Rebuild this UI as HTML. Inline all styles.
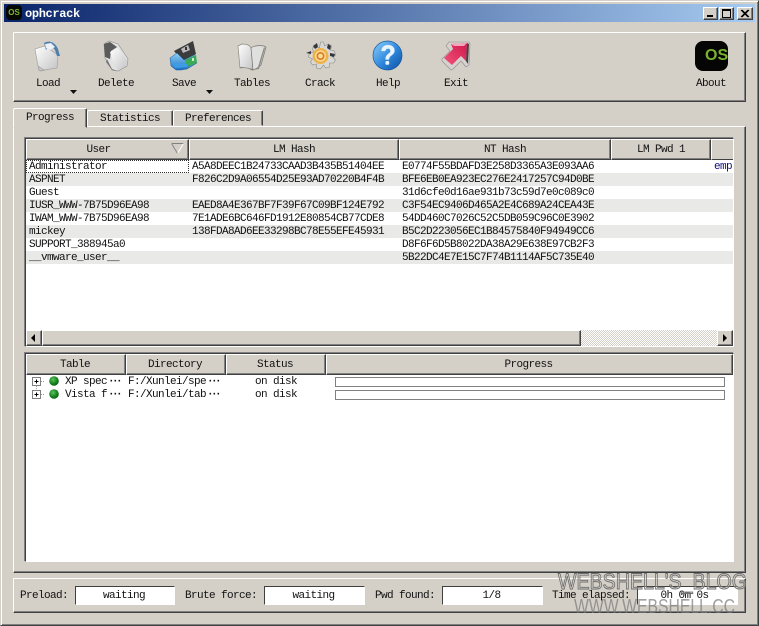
<!DOCTYPE html>
<html><head><meta charset="utf-8"><title>ophcrack</title>
<style>
html,body{margin:0;padding:0;background:#d4d0c8}
body{position:relative;width:759px;height:626px;overflow:hidden;font:11px/13px "Liberation Mono",monospace;letter-spacing:-.6px;color:#111}
div{position:absolute;box-sizing:border-box;white-space:pre}
.c{text-align:center}
.raised{background:#d4d0c8;border:1px solid;border-color:#fff #404040 #404040 #fff;box-shadow:inset -1px -1px 0 #808080}
.hd{background:#d4d0c8;border:1px solid;border-color:#fff #404040 #404040 #fff;box-shadow:inset -1px -1px 0 #808080;text-align:center;line-height:21px}
.sunk{background:#fff;border:1px solid;border-color:#404040 #fff #fff #404040;box-shadow:-1px -1px 0 #808080}
.row{left:26px;width:707px;height:13px}
.z{background:#e9e9e7}
.tab{background:#d4d0c8;border:1px solid;border-color:#fff #404040 #d4d0c8 #fff;box-shadow:inset -1px 0 0 #808080;border-radius:2px 2px 0 0;text-align:center}
.e{letter-spacing:-2.6px;font-weight:bold;margin-left:1px}
svg{position:absolute;overflow:visible}
</style></head><body>

<!-- window frame -->
<div style="left:0;top:0;width:759px;height:626px;border:1px solid;border-color:#d4d0c8 #404040 #404040 #d4d0c8;box-shadow:inset 1px 1px 0 #fff,inset -1px -1px 0 #808080"></div>
<!-- title bar -->
<div style="left:4px;top:4px;width:751px;height:18px;background:linear-gradient(90deg,#0a246a,#a6caf0)"></div>
<div style="left:6px;top:5px;width:16px;height:15px;background:#050805;border-radius:4px;color:#7fb82e;font:bold 8px/15px 'Liberation Sans',sans-serif;letter-spacing:0;text-align:center">OS</div>
<div style="left:25px;top:7px;color:#fff;font:bold 12px/14px 'Liberation Mono',monospace;letter-spacing:-.35px">ophcrack</div>
<div class="raised" style="left:703px;top:7px;width:15px;height:13px"></div>
<div style="left:707px;top:15px;width:6px;height:2px;background:#000"></div>
<div class="raised" style="left:719px;top:7px;width:15px;height:13px"></div>
<div style="left:722px;top:9px;width:9px;height:9px;border:1px solid #000;border-top-width:2px"></div>
<div class="raised" style="left:737px;top:7px;width:16px;height:13px"></div>
<svg style="left:737px;top:7px" width="16" height="13"><path d="M4 3l7 7M5 3l7 7M11 3l-7 7M12 3l-7 7" stroke="#000" fill="none"/></svg>

<!-- toolbar -->
<div class="raised" style="left:13px;top:32px;width:733px;height:70px"></div>

<!-- Load -->
<svg style="left:33px;top:40px" width="30" height="32" viewBox="0 0 30 32">
<defs><linearGradient id="pg" x1="0" y1="0" x2="1" y2="1"><stop offset="0" stop-color="#fff"/><stop offset="1" stop-color="#c4c4c6"/></linearGradient>
<linearGradient id="bl" x1="0" y1="0" x2="0" y2="1"><stop offset="0" stop-color="#8fd0f5"/><stop offset="1" stop-color="#1c6fc4"/></linearGradient>
<linearGradient id="sph" x1="0" y1="0" x2="1" y2="1"><stop offset="0" stop-color="#8fd0fb"/><stop offset=".55" stop-color="#2c86dc"/><stop offset="1" stop-color="#0f4e9c"/></linearGradient>
<linearGradient id="rd" x1="1" y1="0" x2="0" y2="1"><stop offset="0" stop-color="#d0184a"/><stop offset="1" stop-color="#f2547c"/></linearGradient></defs>
<path d="M3 12L13 9l6 19-11 3-2-1z" fill="#c9c9c9" stroke="#8a8a8a" stroke-width=".6"/>
<path d="M2 9l10-3 4 3 9 6-1 13-13 2-6-4z" fill="url(#pg)" stroke="#9a9a9a" stroke-width=".6"/>
<path d="M11 3c5-3 11-1 14 6l2 7-3 0-2-6c-2-3-5-4-7-3l-2 3z" fill="#4d7fae"/>
<path d="M12 4l6-1 4 4-5 3-4-2z" fill="#eef2f6"/>
</svg>

<!-- Delete -->
<svg style="left:101px;top:40px" width="30" height="32" viewBox="0 0 30 32">
<path d="M3 4L8 1l9 3 10 15-1 7-9 5-6-1L4 18z" fill="#e2e2e2" stroke="#8c8c8c" stroke-width=".6"/>
<path d="M3 4l6-2 7 5-6 4-1 8-5-2z" fill="#5a5a5a"/>
<path d="M9 12l8-4 9 12-1 6-8 4-4-4z" fill="url(#pg)"/>
<path d="M6 19l5 10 6 2-6-1-6-8z" fill="#777"/>
</svg>

<!-- Save -->
<svg style="left:169px;top:40px" width="30" height="32" viewBox="0 0 30 32">
<path d="M5 11L24 1l3 13-13 8z" fill="#3c3c3c"/>
<path d="M12 9l7-4 2 5-7 3z" fill="#b9b9b9"/><rect x="16" y="7" width="2" height="3" fill="#333"/>
<path d="M1 18l7-5 7 7 10-5 3 8-10 6-6 1H7l-5-4z" fill="url(#bl)" stroke="#175c9e" stroke-width=".5"/>
<path d="M16 20l11-5 1 8-10 4z" fill="#3aa95a"/>
<path d="M3 23l15 1 0 3-12 1z" fill="#3f9be4"/>
<rect x="23" y="18" width="2" height="3" fill="#c8f0c8"/>
</svg>

<!-- Tables -->
<svg style="left:237px;top:42px" width="30" height="30" viewBox="0 0 30 30">
<path d="M1 4l4-2c4 0 8 1 9 4l2 21-1 1c-3-2-8-3-12-2z" fill="url(#pg)" stroke="#8d8a85" stroke-width=".7"/>
<path d="M14 6c2-2 7-3 13-2l2 1-5 18-3 3-5 2z" fill="#dfdfdd" stroke="#77746e" stroke-width=".7"/>
<path d="M27 5l1 1-6 21-6 1 5-3z" fill="#8d8a85"/>
<path d="M3 26c4-1 9 0 12 2l1-1-12-2z" fill="#6f6c66"/>
</svg>

<!-- Crack -->
<svg style="left:305px;top:41px" width="31" height="30" viewBox="0 0 31 30">
<path d="M15.5 1l3 0 1 4 4-2 3 2-1 4 4 1 1 4-3 2 3 3-2 3-4 0 0 4-4 1-2-3-3 4-4-1 0-4-4 1-2-3 2-3-4-2 1-4 4-1-1-4 3-2 4 2z" fill="#d8d8d4" stroke="#8b8b88" stroke-width=".6"/>
<path d="M8 5l4-3 1 4-3 2zM23 3l3 2-1 4-3-2zM1 12l5-2 0 3zM25 12l5 1-1 3-4-1z" fill="#33363c"/>
<circle cx="15.5" cy="15" r="8" fill="#f0b248"/>
<circle cx="15.5" cy="15" r="5.5" fill="#fbdc97"/>
<circle cx="15.5" cy="15" r="3.2" fill="none" stroke="#d87a1e" stroke-width="1.6"/>
</svg>

<!-- Help -->
<svg style="left:372px;top:40px" width="31" height="31" viewBox="0 0 31 31">
<circle cx="15.5" cy="15.5" r="14.5" fill="url(#sph)" stroke="#14589f" stroke-width=".7"/>
<path d="M9.500 11c0-4 3-6 6.500-6s6.500 2 6.500 5.500c0 5-5.500 4.500-5.500 9h-3.500c0-6 5-5.500 5-8.500 0-1.500-1-2.500-2.500-2.500s-2.500 1-2.800 2.500z" fill="#e9f4fc" stroke="#cfe6f7" stroke-width=".4"/>
<rect x="13.500" y="21" width="3.700" height="3.800" rx="1" fill="#e9f4fc"/>
</svg>

<!-- Exit -->
<svg style="left:441px;top:41px" width="30" height="30" viewBox="0 0 30 30">
<path d="M8 1L28 1l1 2-1 21-3 2-5-6-8 8-2 1L1 20l0-2 8-8-4-5z" fill="#d6d2d0" stroke="#8c8a88" stroke-width=".6"/>
<path d="M10 3l16-1-1 18-5-5-9 9-8-7 9-9z" fill="url(#rd)"/>
<path d="M26 2l2 1-1 20-2-3z" fill="#4a3e40"/>
<path d="M10 3l16-1-3 3-10 0z" fill="#f4a6bc"/>
</svg>

<!-- About -->
<div style="left:695px;top:41px;width:33px;height:30px;background:#040504;border-radius:8px;overflow:hidden;color:#7ab32e;font:bold 16px/30px 'Liberation Sans',sans-serif;letter-spacing:0;padding-left:10px">OS</div>

<div class="c" style="left:18px;top:78px;width:60px">Load</div>
<div class="c" style="left:86px;top:78px;width:60px">Delete</div>
<div class="c" style="left:154px;top:78px;width:60px">Save</div>
<div class="c" style="left:222px;top:78px;width:60px">Tables</div>
<div class="c" style="left:290px;top:78px;width:60px">Crack</div>
<div class="c" style="left:358px;top:78px;width:60px">Help</div>
<div class="c" style="left:426px;top:78px;width:60px">Exit</div>
<div class="c" style="left:681px;top:78px;width:60px">About</div>
<svg style="left:70px;top:90px" width="8" height="4"><path d="M0 0h7L3.500 4z" fill="#111"/></svg>
<svg style="left:206px;top:90px" width="8" height="4"><path d="M0 0h7L3.500 4z" fill="#111"/></svg>

<!-- tab page -->
<div class="raised" style="left:13px;top:126px;width:733px;height:447px"></div>
<!-- tabs -->
<div class="tab" style="left:13px;top:108px;width:74px;height:20px;line-height:18px">Progress</div>
<div class="tab" style="left:87px;top:110px;width:86px;height:16px;line-height:16px">Statistics</div>
<div class="tab" style="left:173px;top:110px;width:90px;height:16px;line-height:16px">Preferences</div>

<!-- hash table -->
<div class="sunk" style="left:25px;top:138px;width:709px;height:209px"></div>
<div class="hd" style="left:26px;top:139px;width:163px;height:21px;padding-right:18px">User</div>
<svg style="left:171px;top:143px" width="13" height="11"><path d="M.5.500h12L6.500 10.500z" fill="none" stroke="#fff"/><path d="M.5.500h12" stroke="#808080" fill="none"/><path d="M.5.500L6.500 10.500" stroke="#808080" fill="none"/></svg>
<div class="hd" style="left:189px;top:139px;width:210px;height:21px">LM Hash</div>
<div class="hd" style="left:399px;top:139px;width:212px;height:21px">NT Hash</div>
<div class="hd" style="left:611px;top:139px;width:100px;height:21px">LM Pwd 1</div>
<div style="left:711px;top:139px;width:22px;height:21px;background:#d4d0c8;border-top:1px solid #fff;border-left:1px solid #fff;border-bottom:1px solid #404040"></div>

<div class="row z" style="top:173px"></div>
<div class="row z" style="top:199px"></div>
<div class="row z" style="top:225px"></div>
<div class="row z" style="top:251px"></div>
<div style="left:26px;top:160px;width:163px;height:13px;border:1px dotted #333"></div>

<div style="left:29px;top:161px">Administrator</div>
<div style="left:29px;top:174px">ASPNET</div>
<div style="left:29px;top:187px">Guest</div>
<div style="left:29px;top:200px">IUSR_WWW-7B75D96EA98</div>
<div style="left:29px;top:213px">IWAM_WWW-7B75D96EA98</div>
<div style="left:29px;top:226px">mickey</div>
<div style="left:29px;top:239px">SUPPORT_388945a0</div>
<div style="left:29px;top:252px">__vmware_user__</div>

<div style="left:192px;top:161px">A5A8DEEC1B24733CAAD3B435B51404EE</div>
<div style="left:192px;top:174px">F826C2D9A06554D25E93AD70220B4F4B</div>
<div style="left:192px;top:200px">EAED8A4E367BF7F39F67C09BF124E792</div>
<div style="left:192px;top:213px">7E1ADE6BC646FD1912E80854CB77CDE8</div>
<div style="left:192px;top:226px">138FDA8AD6EE33298BC78E55EFE45931</div>

<div style="left:402px;top:161px">E0774F55BDAFD3E258D3365A3E093AA6</div>
<div style="left:402px;top:174px">BFE6EB0EA923EC276E2417257C94D0BE</div>
<div style="left:402px;top:187px">31d6cfe0d16ae931b73c59d7e0c089c0</div>
<div style="left:402px;top:200px">C3F54EC9406D465A2E4C689A24CEA43E</div>
<div style="left:402px;top:213px">54DD460C7026C52C5DB059C96C0E3902</div>
<div style="left:402px;top:226px">B5C2D223056EC1B84575840F94949CC6</div>
<div style="left:402px;top:239px">D8F6F6D5B8022DA38A29E638E97CB2F3</div>
<div style="left:402px;top:252px">5B22DC4E7E15C7F74B1114AF5C735E40</div>
<div style="left:714px;top:161px;color:#10107a">emp</div>

<!-- scrollbar -->
<div style="left:26px;top:330px;width:707px;height:16px;background-color:#e8e6e0;background-image:repeating-conic-gradient(#d4d0c8 0 25%,#fff 0 50%);background-size:2px 2px"></div>
<div class="raised" style="left:26px;top:330px;width:16px;height:16px"></div>
<svg style="left:31px;top:334px" width="5" height="8"><path d="M4 0v8L0 4z" fill="#000"/></svg>
<div class="raised" style="left:42px;top:330px;width:539px;height:16px"></div>
<div class="raised" style="left:717px;top:330px;width:16px;height:16px"></div>
<svg style="left:723px;top:334px" width="5" height="8"><path d="M0 0v8L4 4z" fill="#000"/></svg>

<!-- tables table -->
<div class="sunk" style="left:25px;top:353px;width:709px;height:209px"></div>
<div class="hd" style="left:26px;top:354px;width:100px;height:21px;padding-right:2px">Table</div>
<div class="hd" style="left:126px;top:354px;width:100px;height:21px;padding-right:2px">Directory</div>
<div class="hd" style="left:226px;top:354px;width:100px;height:21px;padding-right:2px">Status</div>
<div class="hd" style="left:326px;top:354px;width:407px;height:21px;padding-right:2px">Progress</div>

<svg style="left:32px;top:376px" width="30" height="26">
<path d="M4.500 10v4" stroke="#999" stroke-dasharray="1 1" fill="none"/>
<path d="M9 5.500h4M9 18.500h4" stroke="#999" stroke-dasharray="1 1" fill="none"/>
<rect x=".5" y="1.500" width="8" height="8" fill="#fff" stroke="#808080"/>
<rect x=".5" y="14.500" width="8" height="8" fill="#fff" stroke="#808080"/>
<path d="M2.500 5.500h4M4.500 3.500v4M2.500 18.500h4M4.500 16.500v4" stroke="#000" fill="none"/>
<defs><radialGradient id="gr" cx=".4" cy=".35" r=".7"><stop offset="0" stop-color="#5fc05f"/><stop offset=".6" stop-color="#17861f"/><stop offset="1" stop-color="#075c10"/></radialGradient></defs>
<circle cx="22" cy="5" r="4.800" fill="url(#gr)"/>
<circle cx="22" cy="18" r="4.800" fill="url(#gr)"/>
</svg>
<div style="left:65px;top:376px">XP spec<span class="e">···</span></div>
<div style="left:65px;top:389px">Vista f<span class="e">···</span></div>
<div style="left:128px;top:376px">F:/Xunlei/spe<span class="e">···</span></div>
<div style="left:128px;top:389px">F:/Xunlei/tab<span class="e">···</span></div>
<div style="left:255px;top:376px">on disk</div>
<div style="left:255px;top:389px">on disk</div>
<div style="left:335px;top:377px;width:390px;height:10px;border:1px solid #808080;background:#fff"></div>
<div style="left:335px;top:390px;width:390px;height:10px;border:1px solid #808080;background:#fff"></div>

<!-- status bar -->
<div class="raised" style="left:13px;top:578px;width:733px;height:35px"></div>
<div style="left:20px;top:590px">Preload:</div>
<div class="sunk c" style="left:75px;top:586px;width:100px;height:19px;line-height:19px;box-shadow:none;padding-right:2px">waiting</div>
<div style="left:185px;top:590px">Brute force:</div>
<div class="sunk c" style="left:264px;top:586px;width:101px;height:19px;line-height:19px;box-shadow:none;padding-right:2px">waiting</div>
<div style="left:375px;top:590px">Pwd found:</div>
<div class="sunk c" style="left:442px;top:586px;width:101px;height:19px;line-height:19px;box-shadow:none;padding-right:2px">1/8</div>
<div style="left:552px;top:590px">Time elapsed:</div>
<div class="sunk c" style="left:637px;top:586px;width:101px;height:19px;line-height:19px;box-shadow:none;padding-right:6px">0h 0m 0s</div>

<!-- watermark -->
<svg style="left:0;top:0" width="759" height="626">
<text x="558" y="589" textLength="189" lengthAdjust="spacingAndGlyphs" font-family="Liberation Sans, sans-serif" font-size="22" fill="#d4d0c8" fill-opacity=".35" stroke="#6e6e6e" stroke-width=".9" letter-spacing="0">WEBSHELL'S_BLOG</text>
<text x="574" y="613" textLength="161" lengthAdjust="spacingAndGlyphs" font-family="Liberation Sans, sans-serif" font-size="20" fill="#777" fill-opacity=".7" letter-spacing="0">WWW.WEBSHELL.CC</text>
</svg>
</body></html>
